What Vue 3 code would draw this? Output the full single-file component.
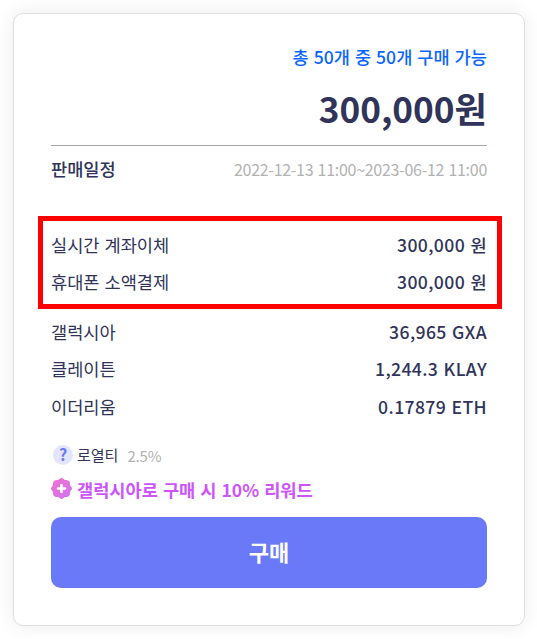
<script setup>
const payments = [
  { name: '실시간 계좌이체', price: '300,000 원' },
  { name: '휴대폰 소액결제', price: '300,000 원' },
]
const coins = [
  { name: '갤럭시아', price: '36,965 GXA' },
  { name: '클레이튼', price: '1,244.3 KLAY' },
  { name: '이더리움', price: '0.17879 ETH' },
]
</script>

<template>
  <main class="card">
    <p class="stock">총 50개 중 50개 구매 가능</p>
    <p class="total">300,000원</p>
    <div class="schedule">
      <span class="schedule-label">판매일정</span>
      <span class="schedule-date">2022-12-13 11:00~2023-06-12 11:00</span>
    </div>
    <ul class="prices highlighted">
      <li v-for="p in payments" :key="p.name">
        <span>{{ p.name }}</span><span class="amount">{{ p.price }}</span>
      </li>
    </ul>
    <ul class="prices">
      <li v-for="c in coins" :key="c.name">
        <span>{{ c.name }}</span><span class="amount">{{ c.price }}</span>
      </li>
    </ul>
    <div class="royalty">
      <span class="help">?</span>
      <span class="royalty-label">로열티</span>
      <span class="rate">2.5%</span>
    </div>
    <div class="reward">
      <svg class="badge" viewBox="0 0 21 21">
        <defs>
          <linearGradient id="badge-fill" x1="0" y1="0" x2="1" y2="1">
            <stop offset="0" stop-color="#f56fcd" />
            <stop offset="1" stop-color="#cb75f4" />
          </linearGradient>
        </defs>
        <path fill="url(#badge-fill)" d="M10.5 0 C12 0 12.7 1.5 14 1.9 C15.4 2.1 17 1.9 18 3 C19.1 4 18.9 5.6 19.1 7 C19.5 8.3 21 9 21 10.5 C21 12 19.5 12.7 19.1 14 C18.9 15.4 19.1 17 18 18 C17 19.1 15.4 18.9 14 19.1 C12.7 19.5 12 21 10.5 21 C9 21 8.3 19.5 7 19.1 C5.6 18.9 4 19.1 3 18 C1.9 17 2.1 15.4 1.9 14 C1.5 12.7 0 12 0 10.5 C0 9 1.5 8.3 1.9 7 C2.1 5.6 1.9 4 3 3 C4 1.9 5.6 2.1 7 1.9 C8.3 1.5 9 0 10.5 0Z" />
        <path d="M10.5 7V14M7 10.5H14" stroke="#fff" stroke-width="2.6" stroke-linecap="round" />
      </svg>
      <span>갤럭시아로 구매 시 10% 리워드</span>
    </div>
    <button class="buy" type="button">구매</button>
  </main>
</template>

<style>
body {
  background: #fff;
}
</style>

<style scoped>
.card {
  box-sizing: border-box;
  width: 512px;
  height: 613px;
  margin: 13px;
  padding: 31px 37px 37px;
  border: 1px solid #dedede;
  border-radius: 10px;
  background: #fff;
  box-shadow: 0 0 20px rgba(0, 0, 0, 0.08);
  color: #30345a;
  font-family: "Noto Sans CJK KR", "Noto Sans", sans-serif;
  font-size: 17.6px;
  word-spacing: 1px;
  white-space: nowrap;
}
p,
ul {
  margin: 0;
  padding: 0;
  list-style: none;
}
.stock {
  line-height: 24px;
  color: #0a66ff;
  font-weight: 500;
  text-align: right;
}
.total {
  height: 77px;
  box-sizing: border-box;
  padding-top: 12px;
  border-bottom: 1px solid #a5a3b2;
  font-size: 35.2px;
  line-height: 54px;
  font-weight: 700;
  text-align: right;
}
.schedule {
  display: flex;
  justify-content: space-between;
  height: 70px;
  line-height: 47px;
}
.schedule-label {
  font-weight: 500;
  line-height: 45px;
}
.schedule-date {
  color: #b2b2b2;
  font-size: 16px;
  letter-spacing: -0.28px;
}
.prices li {
  display: flex;
  justify-content: space-between;
  height: 37.4px;
  line-height: 37px;
}
.amount {
  font-weight: 500;
  letter-spacing: 0.38px;
}
.highlighted {
  height: 93px;
  box-sizing: border-box;
  margin: 0 -15px 4px -13px;
  padding: 5px 10px 0 8px;
  border: 5px solid #f00;
}
.royalty,
.reward {
  display: flex;
  align-items: center;
}
.royalty {
  height: 22px;
  margin-top: 19px;
  padding-left: 2px;
  font-size: 15px;
}
.help {
  width: 20px;
  height: 20px;
  margin-right: 4px;
  border-radius: 50%;
  background: #e3e6fb;
  color: #6979f8;
  font-size: 16px;
  line-height: 19px;
  font-weight: 700;
  text-align: center;
}
.royalty-label {
  padding-bottom: 2px;
}
.rate {
  margin-left: 9px;
  color: #b2b2b2;
  letter-spacing: -0.2px;
}
.reward {
  height: 26px;
  margin: 10px 0 15px;
  gap: 5px;
  color: #cd54fb;
  font-weight: 600;
}
.reward span {
  padding-top: 1px;
}
.badge {
  width: 21px;
  height: 21px;
  margin-bottom: 2px;
}
.buy {
  display: block;
  width: 436px;
  height: 71px;
  padding: 0 0 2px;
  border: 0;
  border-radius: 10px;
  background: #6979f8;
  color: #fff;
  font: 700 22px/69px "Noto Sans CJK KR", sans-serif;
}
</style>
